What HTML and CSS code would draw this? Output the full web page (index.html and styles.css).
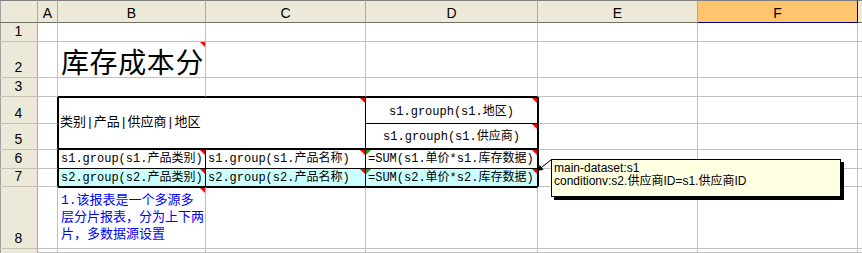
FILE: index.html
```html
<!DOCTYPE html>
<html lang="zh-CN">
<head>
    <meta charset="UTF-8">
    <title>库存成本分</title>
    <link rel="stylesheet" href="styles.css">
</head>
<body>
    <div class="sheet">
        <!-- column headers -->
        <div class="hdr corner"></div>
        <div class="hdr">A</div>
        <div class="hdr">B</div>
        <div class="hdr">C</div>
        <div class="hdr">D</div>
        <div class="hdr">E</div>
        <div class="hdr hdr-sel">F</div>
        <div class="hdr hdr-end"></div>

        <!-- row 1 -->
        <div class="rh">1</div>
        <div class="c"></div><div class="c"></div><div class="c"></div><div class="c"></div>
        <div class="c"></div><div class="c"></div><div class="c end"></div>

        <!-- row 2 -->
        <div class="rh">2</div>
        <div class="c"></div>
        <div class="c title mark">库存成本分</div>
        <div class="c"></div><div class="c"></div><div class="c"></div><div class="c"></div>
        <div class="c end"></div>

        <!-- row 3 -->
        <div class="rh">3</div>
        <div class="c"></div>
        <div class="c edge-b"></div><div class="c edge-b"></div><div class="c edge-b"></div>
        <div class="c"></div><div class="c"></div><div class="c end"></div>

        <!-- report block B4:D7 -->
        <div class="blk">
            <div class="bc bc-merge mark">类别|产品|供应商|地区</div>
            <div class="bc bc-center bc-d4 mark">s1.grouph(s1.地区)</div>
            <div class="bc bc-center bc-d5 mark">s1.grouph(s1.供应商)</div>
            <div class="bc mark">s1.group(s1.产品类别)</div>
            <div class="bc mark">s1.group(s1.产品名称)</div>
            <div class="bc mark mark-l">=SUM(s1.单价*s1.库存数据)</div>
            <div class="bc bc-alt mark">s2.group(s2.产品类别)</div>
            <div class="bc bc-alt mark">s2.group(s2.产品名称)</div>
            <div class="bc bc-alt mark mark-l">=SUM(s2.单价*s2.库存数据)</div>
        </div>

        <!-- rows 4-7 outside the block -->
        <div class="rh">4</div>
        <div class="c edge-r"></div>
        <div class="c edge-l"></div><div class="c"></div><div class="c end"></div>

        <div class="rh">5</div>
        <div class="c edge-r"></div>
        <div class="c edge-l"></div><div class="c"></div><div class="c end"></div>

        <div class="rh">6</div>
        <div class="c edge-r"></div>
        <div class="c edge-l"></div><div class="c"></div><div class="c end"></div>

        <div class="rh">7</div>
        <div class="c edge-r"></div>
        <div class="c edge-l"></div><div class="c"></div><div class="c end"></div>

        <!-- row 8 -->
        <div class="rh">8</div>
        <div class="c"></div>
        <div class="c edge-t note mark">1.该报表是一个多源多<br>层分片报表，分为上下两<br>片，多数据源设置</div>
        <div class="c edge-t"></div><div class="c edge-t"></div>
        <div class="c"></div><div class="c"></div>
        <div class="c end"></div>

        <!-- row 9 (cut off by the window) -->
        <div class="rh rh-cut">9</div>
        <div class="c"></div><div class="c"></div><div class="c"></div><div class="c"></div>
        <div class="c"></div><div class="c"></div><div class="c end"></div>

        <!-- comment on D7 -->
        <svg class="pointer" width="25" height="20" viewBox="0 0 25 20">
            <line x1="21" y1="5" x2="11.5" y2="12.4" stroke="#000" stroke-width="1"/>
            <polygon points="7,16 13.6,14.7 9.8,9.9" fill="#000"/>
        </svg>
        <div class="comment">
            main-dataset:s1<br>
            conditionv:s2.供应商ID=s1.供应商ID
        </div>
    </div>
</body>
</html>
```

FILE: styles.css
```css
* {
    margin: 0;
    padding: 0;
    box-sizing: border-box;
}

body {
    background: #fff;
    font-family: 'Liberation Mono', 'Noto Sans CJK SC', monospace;
    font-size: 12px;
    overflow: hidden;
}

.sheet {
    position: relative;
    display: grid;
    grid-template-columns: 38px 20px 148px 160px 172px 160px 160px 4px;
    grid-template-rows: 23px 19px 36px 19px 27px 26px 19px 18px 62px 4px;
    width: 862px;
    height: 253px;
    overflow: hidden;
}

/* headers */
.hdr {
    background: #ece9d8;
    border-top: 1px solid #7f7f7f;
    border-right: 1px solid #aca899;
    border-bottom: 1px solid #716f64;
    font-family: 'Liberation Sans', sans-serif;
    font-size: 14px;
    line-height: 16px;
    text-align: center;
    padding-top: 4px;
    color: #000;
}

.corner {
    box-shadow: inset 1px 0 #a0a0a0;
}

.hdr-sel {
    background: #ffc46e;
    border-right-color: #000080;
    border-bottom-color: #000080;
}

.hdr-end {
    border-right: none;
}

.rh {
    background: #ece9d8;
    border-right: 1px solid #aca899;
    border-bottom: 1px solid #c5c2b2;
    box-shadow: inset 1px 0 #a0a0a0;
    display: flex;
    justify-content: center;
    align-items: flex-end;
    padding-bottom: 2px;
    font-family: 'Liberation Sans', sans-serif;
    font-size: 14px;
    line-height: 16px;
    overflow: hidden;
}

.rh-cut {
    align-items: flex-start;
    padding: 1px 0 0;
    border-bottom: none;
}

/* cells */
.c {
    background: #fff;
    border-right: 1px solid #c0c0c0;
    border-bottom: 1px solid #c0c0c0;
}

.c.end {
    border-right: none;
}

/* outer half of the thick frame round B4:D7 */
.c.edge-b {
    border-bottom-color: #000;
}

.c.edge-r {
    border-right-color: #000;
}

.c.edge-l {
    border-left: 1px solid #000;
}

.c.edge-t {
    border-top: 1px solid #000;
}

.mark {
    position: relative;
}

.mark::after {
    content: "";
    position: absolute;
    top: 0;
    right: 0;
    border-top: 5px solid #ff0000;
    border-left: 5px solid transparent;
}

.mark-l::before {
    content: "";
    position: absolute;
    top: 0;
    left: 0;
    border-top: 5px solid #1a9a1a;
    border-right: 5px solid transparent;
}

.title {
    display: flex;
    align-items: flex-end;
    padding: 0 0 1px 3px;
    font-family: 'Noto Sans CJK SC', sans-serif;
    font-size: 28px;
    line-height: 30px;
    letter-spacing: 0.6px;
    white-space: nowrap;
}

.note {
    padding: 4px 0 0 3px;
    color: #0000ff;
    font-size: 13px;
    line-height: 17px;
    white-space: nowrap;
}

/* B4:D7 report block */
.blk {
    grid-column: 3 / 6;
    grid-row: 5 / 9;
    display: grid;
    grid-template-columns: 147px 160px 172px;
    grid-template-rows: 26px 26px 19px 18px;
    border-left: 1px solid #000;
    border-top: 1px solid #000;
}

.bc {
    background: #fff;
    border-right: 1px solid #000;
    border-bottom: 1px solid #000;
    display: flex;
    align-items: center;
    padding: 0 2px;
    line-height: 16px;
    white-space: nowrap;
    overflow: hidden;
}

.bc-merge {
    grid-column: 1 / 3;
    grid-row: 1 / 3;
    border-bottom-width: 2px;
    padding-left: 1px;
    font-size: 13px;
}

.bc-center {
    justify-content: center;
    padding-top: 2px;
}

.bc-d5 {
    border-bottom-width: 2px;
}

.bc-alt {
    background: #ccffff;
}

/* comment box */
.pointer {
    position: absolute;
    left: 530px;
    top: 155px;
}

.comment {
    position: absolute;
    left: 551px;
    top: 159px;
    width: 290px;
    height: 38px;
    background: #ffffe1;
    border: 1px solid #000;
    box-shadow: 3px 3px 0 #000;
    padding: 2px 2px 0;
    font-family: 'Liberation Sans', 'Noto Sans CJK SC', sans-serif;
    font-size: 12px;
    line-height: 13px;
    white-space: nowrap;
}
```
